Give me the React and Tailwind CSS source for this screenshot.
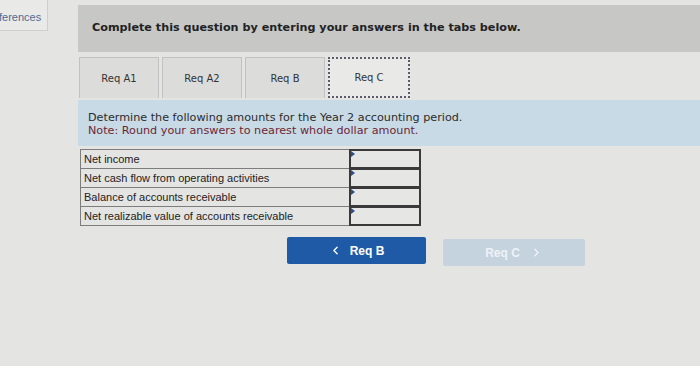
import { ChevronLeft, ChevronRight } from 'lucide-react';

const tabs = ['Req A1', 'Req A2', 'Req B', 'Req C'];

const rows = [
  'Net income',
  'Net cash flow from operating activities',
  'Balance of accounts receivable',
  'Net realizable value of accounts receivable',
];

export default function App() {
  return (
    <div className="relative flex h-[366px] w-[700px] overflow-hidden bg-[#e4e4e3]">
      {/* left references stub */}
      <div className="w-[78px] shrink-0">
        <div className="flex h-[31px] w-[48px] items-center overflow-hidden border-b border-r border-[#cfcfcf] bg-[#e9e9e8] pt-[4px] font-['Liberation_Sans',Arial,sans-serif] text-[11px] text-[#4d6b96]">
          <span className="-ml-[1px]">ferences</span>
        </div>
      </div>

      <div className="flex flex-1 flex-col pt-[5px]">
        <div className="flex h-[47px] items-center bg-[#c7c7c6] pl-[14px] font-['DejaVu_Sans',sans-serif] text-[11.2px] font-bold text-[#222]">
          Complete this question by entering your answers in the tabs below.
        </div>

        <div className="mt-[5px] flex gap-[3px] pl-[1px] font-['DejaVu_Sans',sans-serif] text-[10px] text-[#333]">
          {tabs.map((t, i) =>
            i === 3 ? (
              <div
                key={t}
                className="flex h-[41px] w-[82px] items-center justify-center border-2 border-dotted border-[#5a5a6a] bg-[#e9e9e8]"
              >
                {t}
              </div>
            ) : (
              <div
                key={t}
                className="flex h-[41px] w-[80px] items-center justify-center border border-b-0 border-[#c2c2c2] bg-[#dcdcdb]"
              >
                {t}
              </div>
            )
          )}
        </div>

        <div className="mt-[2px] h-[46px] bg-[#c8dae5] pl-[10px] pt-[11px] font-['DejaVu_Sans',sans-serif] text-[11.2px] leading-[13px]">
          <p className="text-[#2c2c2c]">Determine the following amounts for the Year 2 accounting period.</p>
          <p className="text-[#6e2636]">Note: Round your answers to nearest whole dollar amount.</p>
        </div>

        <div className="ml-[2px] mt-[3px] w-[341px] font-['Liberation_Sans',Arial,sans-serif] text-[11px] text-[#222]">
          {rows.map((r, i) => (
            <div key={r} className={`flex h-[20px] ${i > 0 ? '-mt-[1px]' : ''}`}>
              <div className="flex flex-1 items-center border border-[#7d7d7d] pl-[3px]">{r}</div>
              <div className="relative -ml-[1px] w-[72px] border-2 border-[#3a3a3a] bg-[#e6e6e5]">
                <span className="absolute left-[0px] top-[0px] h-0 w-0 border-b-[3px] border-l-[4px] border-t-[3px] border-b-transparent border-l-[#2b4f86] border-t-transparent" />
              </div>
            </div>
          ))}
        </div>

        <div className="mt-[11px] flex items-start pl-[209px] font-['Liberation_Sans',Arial,sans-serif] text-[12px] font-bold">
          <div className="flex h-[27px] w-[139px] items-center justify-center gap-[8px] rounded-[2px] bg-[#1f5aa6] text-white">
            <ChevronLeft size={13} strokeWidth={2.5} />
            <span>Req B</span>
          </div>
          <div className="ml-[17px] mt-[2px] flex h-[27px] w-[142px] items-center justify-center gap-[10px] rounded-[2px] bg-[#c5d3df] text-[#eef2f6]">
            <span>Req C</span>
            <ChevronRight size={13} strokeWidth={2.5} />
          </div>
        </div>
      </div>
    </div>
  );
}
